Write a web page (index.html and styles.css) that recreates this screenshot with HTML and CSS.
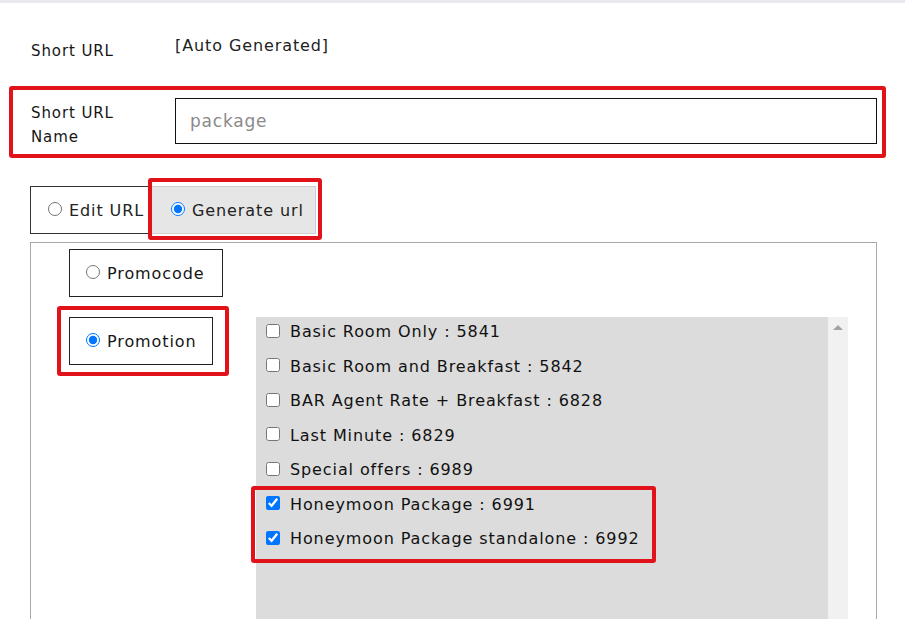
FILE: index.html
```html
<!DOCTYPE html>
<html lang="en">
<head>
  <meta charset="UTF-8" />
  <meta name="viewport" content="width=device-width, initial-scale=1" />
  <title>Short URL</title>
  <link rel="stylesheet" href="styles.css">
</head>
<body>

<div class="topbar"></div>

<div class="form">
  <div class="row row-first">
    <div class="label">Short URL</div>
    <div class="value">[Auto Generated]</div>
  </div>

  <div class="row row-name mark mark-name">
    <div class="label">Short URL<br>Name</div>
    <input class="text-input" type="text" placeholder="package">
  </div>

  <div class="tabs">
    <label class="tab tab-edit"><input type="radio" name="mode"> Edit URL</label>
    <label class="tab tab-active mark mark-tab"><input type="radio" name="mode" checked> Generate url</label>
  </div>

  <div class="panel">
    <label class="opt-box opt-code"><input type="radio" name="kind"> Promocode</label>

    <div class="promo-row">
      <label class="opt-box opt-promo mark mark-promo"><input type="radio" name="kind" checked> Promotion</label>

      <div class="list-wrap">
        <div class="list">
          <label class="item"><input type="checkbox"> Basic Room Only : 5841</label>
          <label class="item"><input type="checkbox"> Basic Room and Breakfast : 5842</label>
          <label class="item"><input type="checkbox"> BAR Agent Rate + Breakfast : 6828</label>
          <label class="item"><input type="checkbox"> Last Minute : 6829</label>
          <label class="item"><input type="checkbox"> Special offers : 6989</label>
          <div class="group mark mark-pkg">
            <label class="item"><input type="checkbox" checked> Honeymoon Package : 6991</label>
            <label class="item"><input type="checkbox" checked> Honeymoon Package standalone : 6992</label>
          </div>
        </div>
        <div class="scrollbar"><span class="arrow"></span></div>
      </div>
    </div>
  </div>
</div>

</body>
</html>
```

FILE: styles.css
```css
* {
  box-sizing: border-box;
  margin: 0;
  padding: 0;
}

body {
  font-family: 'DejaVu Sans', 'Noto Sans', sans-serif;
  font-size: 16px;
  letter-spacing: 0.9px;
  color: #161616;
  background: #fff;
  overflow: hidden;
}

.topbar {
  height: 3px;
  background: #e8e8ee;
}

.form {
  padding: 0 28px 0 30px;
}

/* rows */
.row {
  display: flex;
  align-items: flex-start;
}

.label {
  width: 145px;
  flex-shrink: 0;
  padding-left: 1px;
  font-size: 15px;
  line-height: 24px;
  color: #161616;
}

.row-first {
  margin-top: 31px;
}

.row-first .label {
  padding-top: 5px;
}

.value {
  line-height: 24px;
  color: #222;
}

.row-name {
  margin-top: 35px;
  height: 46px;
}

.row-name .label {
  padding-top: 3px;
}

.text-input {
  flex: 1;
  height: 46px;
  border: 1px solid #111;
  padding-left: 14px;
  font-family: inherit;
  font-size: 17px;
  letter-spacing: 0.8px;
  color: #333;
  outline: none;
}

.text-input::placeholder {
  color: #8a8a8a;
}

/* red annotation frames */
.mark {
  position: relative;
}

.mark::after {
  content: "";
  position: absolute;
  border: 4px solid #e2121b;
  border-radius: 3px;
  pointer-events: none;
}

.mark-name::after {
  top: -12px;
  bottom: -14px;
  left: -21px;
  right: -9px;
}

.mark-tab::after {
  top: -9px;
  bottom: -7px;
  left: -4px;
  right: -7px;
}

.mark-promo::after {
  top: -12px;
  bottom: -12px;
  left: -13px;
  right: -17px;
}

.mark-pkg::after {
  top: -7px;
  bottom: -12px;
  left: -15px;
  right: -16px;
}

/* tabs */
.tabs {
  display: flex;
  margin-top: 42px;
}

.tab {
  display: flex;
  align-items: center;
  height: 48px;
  padding-left: 12px;
  border: 1px solid #333;
  background: #fff;
  color: #222;
  white-space: nowrap;
}

.tab-edit {
  width: 121px;
}

.tab input,
.opt-box input {
  margin: -2px 7px 0 5px;
  width: 14px;
  height: 14px;
  flex-shrink: 0;
}

.tab-active {
  width: 165px;
  background: #e6e6e6;
  border-color: #cfcfcf;
  padding-left: 14px;
}

/* panel */
.panel {
  margin-top: 8px;
  border: 1px solid #a9a9a9;
  border-bottom: none;
  padding: 6px 0 0 38px;
  height: 400px;
}

.opt-box {
  display: flex;
  align-items: center;
  height: 48px;
  padding-left: 11px;
  border: 1px solid #222;
  white-space: nowrap;
}

.opt-code {
  width: 154px;
}

.opt-promo {
  width: 144px;
  flex-shrink: 0;
}

.promo-row {
  display: flex;
  align-items: flex-start;
  margin-top: 20px;
}

.list-wrap {
  display: flex;
  margin-left: 43px;
  margin-right: 28px;
  flex: 1;
  height: 320px;
}

.list {
  flex: 1;
  background: #dcdcdc;
  padding: 3px 0 0 10px;
  display: flex;
  flex-direction: column;
  gap: 10.5px;
}

.group {
  display: flex;
  flex-direction: column;
  gap: 10.5px;
  width: fit-content;
}

.item {
  display: flex;
  align-items: center;
  line-height: 24px;
  color: #111;
  white-space: nowrap;
}

.item input {
  width: 14px;
  height: 14px;
  margin: -3px 10px 0 0;
  flex-shrink: 0;
}

.scrollbar {
  width: 20px;
  background: #f1f1f1;
  display: flex;
  justify-content: center;
  padding-top: 8px;
}

.arrow {
  width: 0;
  height: 0;
  border-left: 5px solid transparent;
  border-right: 5px solid transparent;
  border-bottom: 5px solid #a3a3a3;
}
```
